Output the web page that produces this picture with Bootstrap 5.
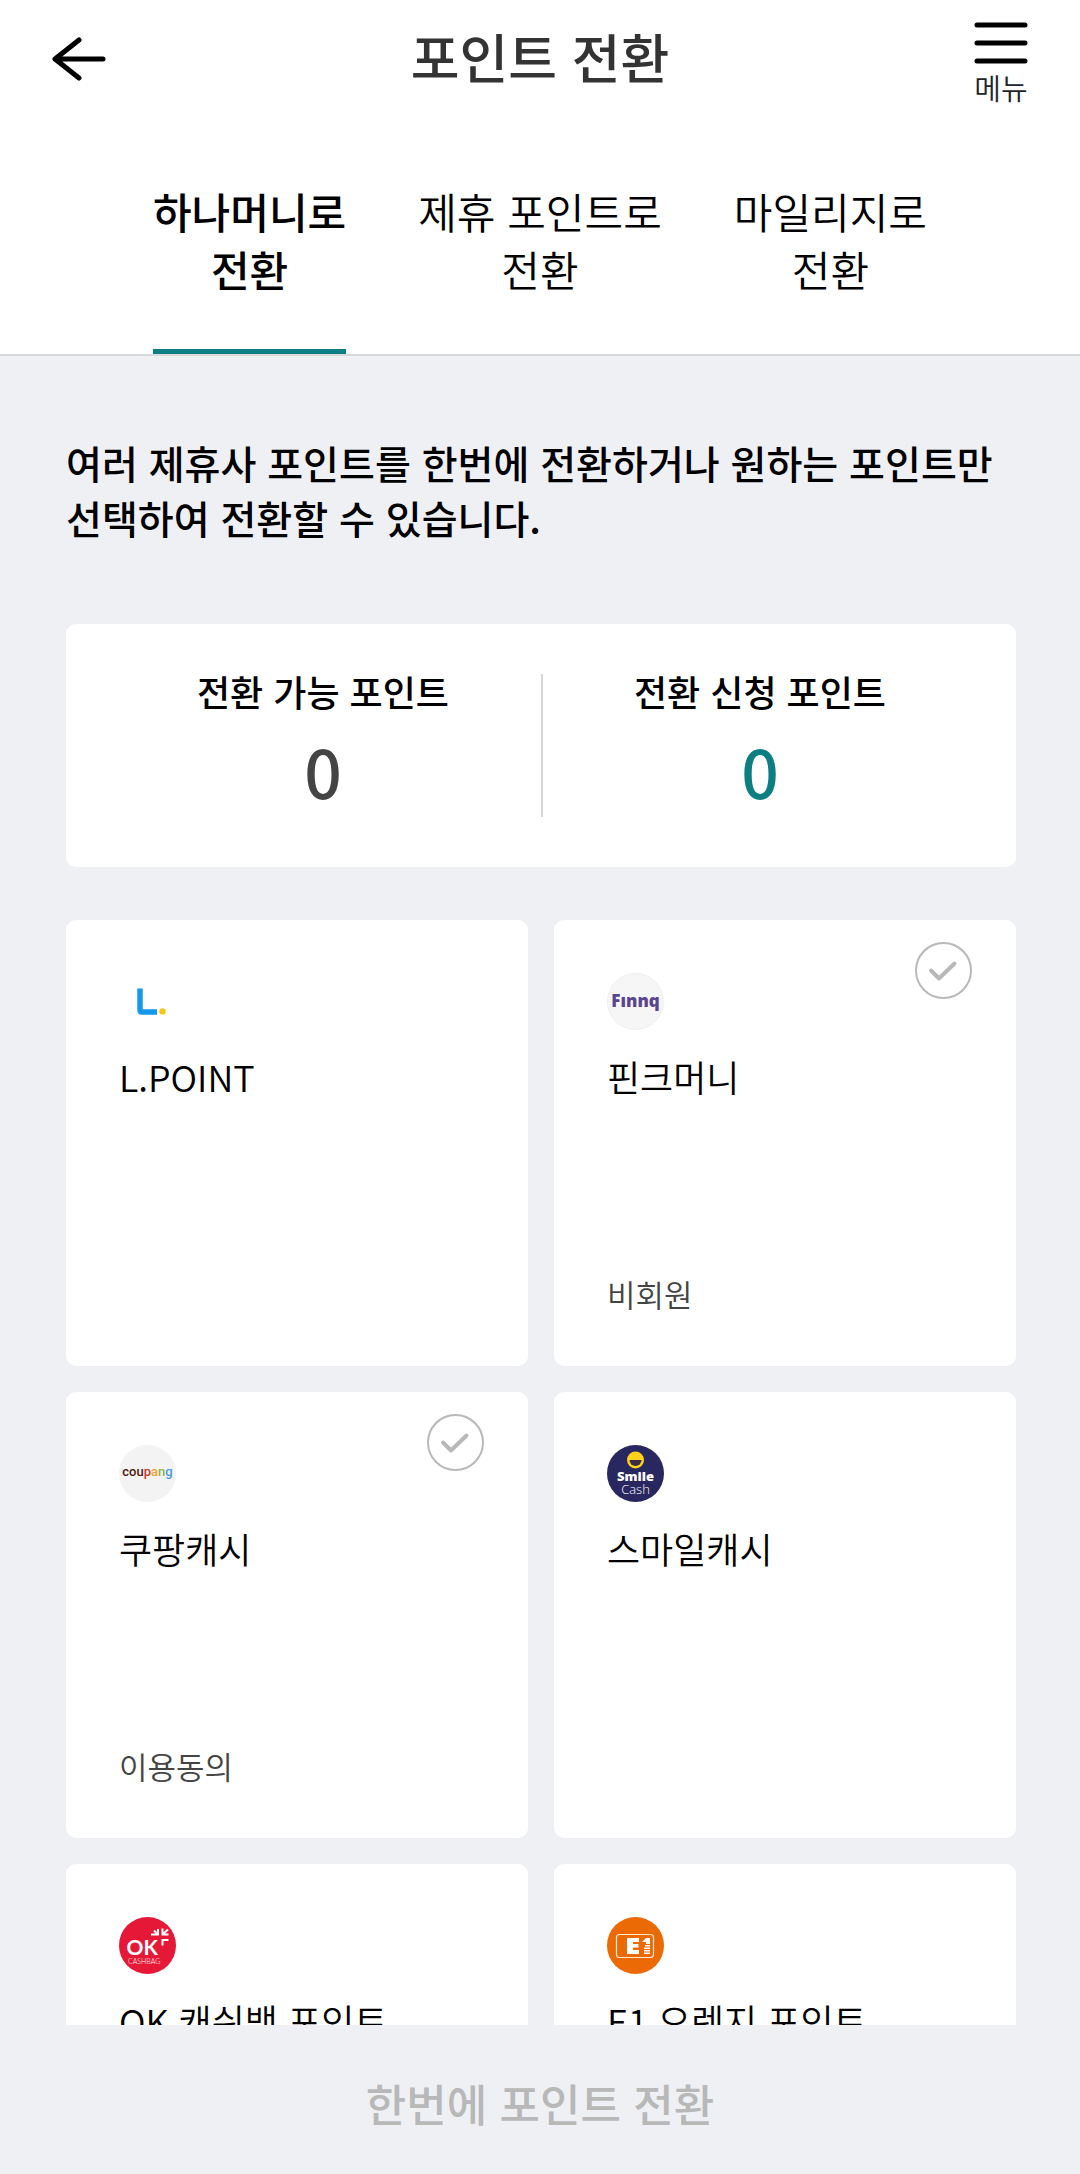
<!DOCTYPE html>
<html lang="ko">
<head>
<meta charset="utf-8">
<meta name="viewport" content="width=device-width, initial-scale=1">
<title>포인트 전환</title>
<link href="https://cdn.jsdelivr.net/npm/bootstrap@5.3.0/dist/css/bootstrap.min.css" rel="stylesheet">
<style>
  :root { --page: #eff0f4; --teal: #0d7f82; --muted: #b8b8b8; }
  body { font-family: "Noto Sans CJK KR", "Noto Sans", sans-serif; font-weight: 350; background: var(--page); color: #000; }
  a, button { color: inherit; }
  .topbar { padding: 0 52px; height: 118px; }
  .topbar-side { flex: 1 1 0; }
  .topbar-title { font-size: 53px; line-height: 78px; font-weight: 500; color: #333; padding-bottom: 6px; }
  .menu-btn.btn { font-size: 29px; line-height: 44px; font-weight: 350; padding: 12px 0 0; }
  .tabs { gap: 72px; border-bottom: 2px solid #d8d9dd; }
  .tabs .nav-link { padding: 64px 0 51px; font-size: 42px; line-height: 58px; color: #000; text-align: center; border-bottom: 5px solid transparent; }
  .tabs .nav-link.active { font-weight: 500; border-bottom-color: var(--teal); }
  .scroll-area { padding: 79px 64px 0 66px; min-height: 0; scrollbar-width: none; }
  .scroll-area::-webkit-scrollbar { display: none; }
  .intro { font-size: 39px; line-height: 55px; font-weight: 500; margin-bottom: 79px; }
  .panel { background: #fff; border-radius: 10px; }
  .summary { padding: 50px 39px; margin-bottom: 53px; }
  .summary dl + dl { border-left: 2px solid #d5d6da; }
  .summary dt { font-size: 36px; line-height: 34px; font-weight: 500; margin-bottom: 16px; }
  .summary dd { font-size: 66px; line-height: 93px; font-weight: 500; color: #444; }
  .summary .applied { color: var(--teal); }
  .partners { gap: 26px; grid-template-columns: 1fr 1fr; }
  .partner { height: 446px; padding: 53px; }
  .partner-logo { width: 57px; height: 57px; }
  .partner-name { font-size: 36px; line-height: 54px; font-weight: 350; margin-top: 19px; }
  .partner-state { font-size: 31px; line-height: 38px; color: #444; }
  .partner-check.form-check-input { top: 22px; right: 44px; width: 57px; height: 57px; margin: 0; border: 2px solid var(--muted); border-radius: 50%;
    background: #fff url("data:image/svg+xml,%3Csvg xmlns='http://www.w3.org/2000/svg' viewBox='0 0 53 53'%3E%3Cpath d='M14 26.500l8 8 15.500-15' fill='none' stroke='%23b8b8b8' stroke-width='4' stroke-linecap='round' stroke-linejoin='round'/%3E%3C/svg%3E") center / 100% 100% no-repeat; }
  .partner-check.form-check-input:checked { border-color: var(--teal); }
  .bottom-bar { height: 149px; background: var(--page); }
  .submit-btn.btn { font-size: 44px; line-height: 66px; font-weight: 500; color: var(--muted); padding-top: 12px; }
</style>
<script src="https://cdn.jsdelivr.net/npm/bootstrap@5.3.0/dist/js/bootstrap.bundle.min.js" defer></script>
</head>
<body class="d-flex flex-column vh-100 overflow-hidden">
<header class="bg-white flex-shrink-0">
  <div class="topbar d-flex align-items-center">
    <div class="topbar-side">
      <button type="button" class="btn p-0 border-0 d-block" aria-label="뒤로">
        <svg class="d-block" width="54" height="46" viewBox="0 0 54 46" fill="none" stroke="#000" stroke-width="5" stroke-linecap="round" stroke-linejoin="round"><path d="M51 23H3M27 4L3 23l24 19"/></svg>
      </button>
    </div>
    <h1 class="topbar-title m-0">포인트 전환</h1>
    <div class="topbar-side d-flex justify-content-end">
      <button type="button" class="menu-btn btn border-0 d-flex flex-column align-items-center">
        <svg width="54" height="44" viewBox="0 0 54 44" stroke="#000" stroke-width="5" stroke-linecap="round"><path d="M3 4h48M3 22h48M3 40h48"/></svg>
        메뉴
      </button>
    </div>
  </div>
  <nav aria-label="전환 종류">
    <ul class="tabs nav justify-content-center">
      <li class="nav-item"><a class="nav-link active" aria-current="page" href="#">하나머니로<br>전환</a></li>
      <li class="nav-item"><a class="nav-link" href="#">제휴 포인트로<br>전환</a></li>
      <li class="nav-item"><a class="nav-link" href="#">마일리지로<br>전환</a></li>
    </ul>
  </nav>
</header>

<main class="scroll-area flex-grow-1 overflow-auto">
  <p class="intro">여러 제휴사 포인트를 한번에 전환하거나 원하는 포인트만 선택하여 전환할 수 있습니다.</p>

  <section class="summary panel d-flex text-center">
    <dl class="flex-fill w-50 m-0">
      <dt>전환 가능 포인트</dt>
      <dd class="m-0">0</dd>
    </dl>
    <dl class="flex-fill w-50 m-0">
      <dt>전환 신청 포인트</dt>
      <dd class="applied m-0">0</dd>
    </dl>
  </section>

  <section class="partners d-grid">
    <article class="partner panel d-flex flex-column">
      <svg class="partner-logo" viewBox="0 0 57 57" aria-hidden="true">
        <path d="M21 15.500V37q0 2 2 2h15" fill="none" stroke="#1399ea" stroke-width="5.500"/>
        <circle cx="43.500" cy="38.500" r="3.200" fill="#f2c91d"/>
      </svg>
      <h2 class="partner-name mb-0">L.POINT</h2>
    </article>

    <article class="partner panel d-flex flex-column position-relative">
      <input class="partner-check form-check-input position-absolute" type="checkbox" id="finnq">
      <svg class="partner-logo" viewBox="0 0 57 57" aria-hidden="true">
        <circle cx="28.500" cy="28.500" r="28" fill="#f6f6f7" stroke="#efeff0"/>
        <text x="28.500" y="34" font-family="Open Sans, sans-serif" font-size="17" font-weight="800" fill="#5b4590" text-anchor="middle">Fınnq</text>
      </svg>
      <h2 class="partner-name mb-0"><label for="finnq">핀크머니</label></h2>
      <div class="partner-state mt-auto">비회원</div>
    </article>

    <article class="partner panel d-flex flex-column position-relative">
      <input class="partner-check form-check-input position-absolute" type="checkbox" id="coupang">
      <svg class="partner-logo" viewBox="0 0 57 57" aria-hidden="true">
        <circle cx="28.500" cy="28.500" r="28.500" fill="#f3f3f3"/>
        <text x="28.500" y="31" font-family="Roboto, sans-serif" font-size="13" font-weight="500" fill="#4f1614" text-anchor="middle">cou<tspan fill="#c8372f">p</tspan><tspan fill="#f0a028">a</tspan><tspan fill="#86b83c">n</tspan><tspan fill="#4b9be0">g</tspan></text>
      </svg>
      <h2 class="partner-name mb-0"><label for="coupang">쿠팡캐시</label></h2>
      <div class="partner-state mt-auto">이용동의</div>
    </article>

    <article class="partner panel d-flex flex-column">
      <svg class="partner-logo" viewBox="0 0 57 57" aria-hidden="true">
        <circle cx="28.500" cy="28.500" r="28.500" fill="#28275f"/>
        <circle cx="28.500" cy="15" r="8.500" fill="#fbd31c"/>
        <path d="M22.500 15h12a6 6 0 0 1-12 0z" fill="#3a2c45"/>
        <g font-family="Open Sans, sans-serif" fill="#fff" text-anchor="middle">
          <text x="28.500" y="36" font-size="13" font-weight="800">Smile</text>
          <text x="28.500" y="49" font-size="13">Cash</text>
        </g>
      </svg>
      <h2 class="partner-name mb-0">스마일캐시</h2>
    </article>

    <article class="partner panel d-flex flex-column">
      <svg class="partner-logo" viewBox="0 0 57 57" aria-hidden="true">
        <circle cx="28.500" cy="28.500" r="28.500" fill="#e51937"/>
        <g font-family="Lato, sans-serif" fill="#fff">
          <text x="7.500" y="38" font-size="21" font-weight="700">OK</text>
          <text x="9" y="47" font-size="7">CASHBAG</text>
        </g>
        <path d="M32 17.500h7V12M35 13.500l4 4M43.500 11.500v6h6M49 12.500l-5.500 5M43.500 28.500V23h6" fill="none" stroke="#fff" stroke-width="2"/>
      </svg>
      <h2 class="partner-name mb-0">OK 캐쉬백 포인트</h2>
    </article>

    <article class="partner panel d-flex flex-column">
      <svg class="partner-logo" viewBox="0 0 57 57" aria-hidden="true">
        <circle cx="28.500" cy="28.500" r="28.500" fill="#eb6a06"/>
        <rect x="9.500" y="17.500" width="37" height="23" rx="3" fill="none" stroke="#ffe9c9" stroke-width="1.200"/>
        <path d="M20 21h12v4h-6v2h5.500v3.500H26v2.500h6v4H20zM35 25l4-4h4v6h-4v-2zM38 28h5v1.500h-5zM37 30.500h6V32h-6zM37 33h6v1.500h-6zM37 35.500h6V37h-6z" fill="#fff"/>
      </svg>
      <h2 class="partner-name mb-0">E1 오렌지 포인트</h2>
    </article>
  </section>
</main>

<footer class="bottom-bar flex-shrink-0 d-flex">
  <button type="button" class="submit-btn btn border-0 w-100">한번에 포인트 전환</button>
</footer>
</body>
</html>
